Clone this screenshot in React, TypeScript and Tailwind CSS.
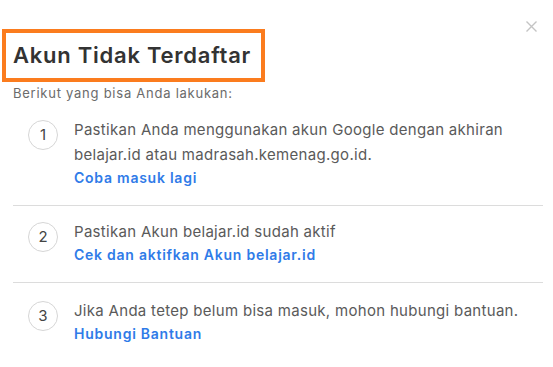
const steps = [
  {
    no: 1,
    text: "Pastikan Anda menggunakan akun Google dengan akhiran belajar.id atau madrasah.kemenag.go.id.",
    link: "Coba masuk lagi",
  },
  {
    no: 2,
    text: "Pastikan Akun belajar.id sudah aktif",
    link: "Cek dan aktifkan Akun belajar.id",
  },
  {
    no: 3,
    text: "Jika Anda tetep belum bisa masuk, mohon hubungi bantuan.",
    link: "Hubungi Bantuan",
  },
];

export default function App() {
  return (
    <div className="relative w-[553px] h-[367px] bg-white font-[family-name:Inter,sans-serif] tracking-[0.75px] overflow-hidden">
      {/* close */}
      <button className="absolute right-[16px] top-[21px] text-[#c4c4c4]">
        <svg width="11" height="11" viewBox="0 0 11 11" stroke="currentColor" strokeWidth="1.4" fill="none">
          <path d="M0.5 0.5l10 10M10.5 0.5l-10 10" />
        </svg>
      </button>

      <div className="pt-[29px] pl-[2px]">
        <div className="inline-block border-4 border-[#fb7c1e] pl-[7px] pr-[10px] h-[53px]">
          <h1 className="text-[22px] leading-[45px] font-semibold text-[#333333]">Akun Tidak Terdaftar</h1>
        </div>
      </div>

      <div className="pl-[13px] pr-[10px]">
        <p className="mt-[2px] text-[13px] leading-[18px] text-[#6b6b6b]">Berikut yang bisa Anda lakukan:</p>

        <ul className="mt-[2px]">
          {steps.map((s, i) => (
            <li
              key={s.no}
              className={`flex gap-[16px] pl-[15px] pb-[16px] ${i < steps.length - 1 ? "border-b border-[#dcdcdc]" : ""} ${i === 2 ? "pt-[15px]" : "pt-[13px]"}`}
            >
              <div className="mt-[3px] w-[30px] h-[30px] flex-none rounded-full border border-[#d6d6d6] flex items-center justify-center text-[15px] tracking-normal text-[#444]">
                {s.no}
              </div>
              <div>
                <p className="text-[15px] leading-[25px] tracking-[0.3px] text-[#5a5a5a]">{s.text}</p>
                <a className="block text-[14px] leading-[22px] font-semibold text-[#2f7be8]">{s.link}</a>
              </div>
            </li>
          ))}
        </ul>
      </div>
    </div>
  );
}
